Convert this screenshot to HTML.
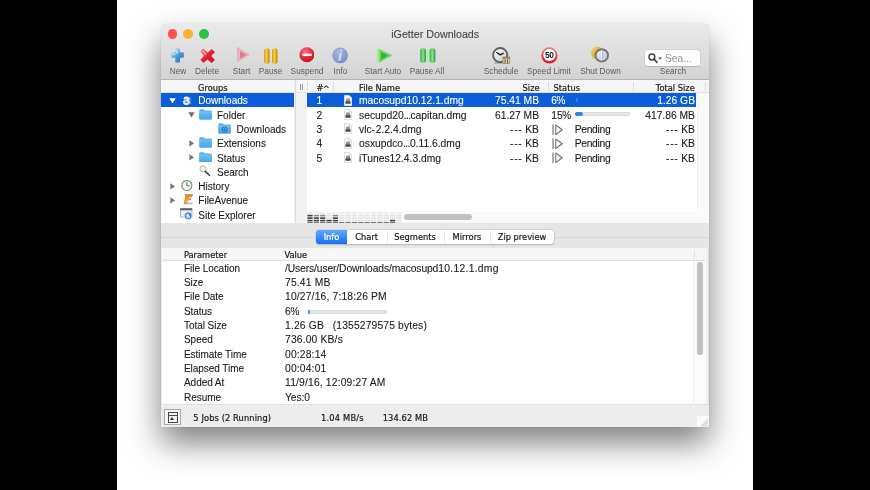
<!DOCTYPE html>
<html><head><meta charset="utf-8"><title>iGetter Downloads</title>
<style>
*{box-sizing:border-box;margin:0;padding:0}
html,body{width:870px;height:490px;overflow:hidden;background:#fff}
body{position:relative;font-family:"Liberation Sans",sans-serif;color:#1a1a1a}
.abs,.abs *{position:absolute}
.bar{position:absolute;top:0;height:490px;background:#000}
#win{will-change:transform;position:absolute;left:161px;top:24px;width:549px;height:403px}
#winbg{position:absolute;left:.3px;top:-.4px;width:547.8px;height:403.2px;background:#ececec;border-radius:5px 5px 0 0;
 box-shadow:0 0 1px rgba(0,0,0,.3),0 16px 32px rgba(0,0,0,.5)}
#chrome{position:absolute;left:.3px;top:-.4px;width:547.8px;height:56px;border-radius:5px 5px 0 0;
 background:linear-gradient(#eaeaea,#d3d3d3);border-bottom:1px solid #b4b4b4}
.tl{position:absolute;top:5px;width:9.8px;height:9.8px;border-radius:50%}
#title{position:absolute;left:.3px;width:547.8px;top:4.2px;text-align:center;font-size:10.7px;color:#444;line-height:12px;-webkit-text-stroke:.1px currentColor}
.tbl{position:absolute;top:42px;font-size:8.3px;color:#5c5c5c;line-height:10px;white-space:nowrap;transform:translateX(-50%)}
.t{position:absolute;white-space:nowrap;line-height:14px;font-size:10.3px;-webkit-text-stroke:.1px currentColor}
.h{position:absolute;white-space:nowrap;line-height:12px;font-size:8.3px;font-family:"DejaVu Sans","Liberation Sans",sans-serif;color:#1c1c1c;-webkit-text-stroke:.22px currentColor}
.r{text-align:right}
.e{letter-spacing:-.6px}
.d{letter-spacing:.7px}
.p{font-size:10px;margin-left:-.5px;letter-spacing:-.6px}
.w{color:#fff}
</style></head><body>
<div class="bar" style="left:0;width:117px"></div>
<div class="bar" style="left:753px;width:117px"></div>
<div id="win">
 <div id="winbg"></div>
 <div id="chrome"></div>
 <div class="tl" style="left:6.7px;background:#f9534f"></div>
 <div class="tl" style="left:22.4px;background:#f9b233"></div>
 <div class="tl" style="left:38.2px;background:#2fc143"></div>
 <div id="title">iGetter Downloads</div>
 <div class="tbl" style="left:17px">New</div>
<div class="tbl" style="left:46px">Delete</div>
<div class="tbl" style="left:80.5px">Start</div>
<div class="tbl" style="left:109.5px">Pause</div>
<div class="tbl" style="left:146px">Suspend</div>
<div class="tbl" style="left:179.5px">Info</div>
<div class="tbl" style="left:222px">Start Auto</div>
<div class="tbl" style="left:266px">Pause All</div>
<div class="tbl" style="left:340px">Schedule</div>
<div class="tbl" style="left:388px">Speed Limit</div>
<div class="tbl" style="left:439.5px">Shut Down</div>
<div class="tbl" style="left:512px">Search</div>
<svg style="position:absolute;left:10.4px;top:24.3px" width="13.2" height="14.9" viewBox="0 0 13.2 14.9"><defs><linearGradient id="pl" x1="0" y1="0" x2="1" y2="1"><stop offset="0" stop-color="#b9def6"/><stop offset=".5" stop-color="#4a9fde"/><stop offset="1" stop-color="#2462a8"/></linearGradient></defs><path d="M4.8 0.5H8.6L9 4.2L12.8 4.5V9.6L9.2 9.8L8.8 14.4H4.4L4.2 9.9L0.4 9.7V4.7L4.5 4.4Z" fill="url(#pl)"/><path d="M5.6 1.2H7L7.2 5.2L4.9 5.4Z" fill="#d5ecfa" opacity=".8"/><path d="M1 5.4L4.6 5.2V7L1 7.2Z" fill="#c2e2f7" opacity=".8"/></svg>
<svg style="position:absolute;left:38.6px;top:24px" width="15.3" height="15.5" viewBox="0 0 15.3 15.5"><defs><linearGradient id="rx" x1="0" y1="0" x2="1" y2="1"><stop offset="0" stop-color="#f08a94"/><stop offset=".5" stop-color="#e5202c"/><stop offset="1" stop-color="#b8101c"/></linearGradient></defs><path d="M3 0.5L7.6 4.4L11.6 0.9L15 4.1L11.2 7.9L14.9 11.9L11.6 15.1L7.5 11.4L3.4 15.1L0.3 11.8L4.1 7.8L0.3 3.6Z" fill="url(#rx)"/><path d="M2.6 2L7 5.8L5.4 7.2L1.6 3.2Z" fill="#f9c2c8" opacity=".7"/></svg>
<svg style="position:absolute;left:76px;top:23.4px" width="12.6" height="15" viewBox="0 0 12.6 15"><path d="M0.6 0.6L12.2 7.6L0.6 14.4Z" fill="#eab8c0" stroke="#dfa2ac" stroke-width=".8" stroke-linejoin="round"/><path d="M3 4L9.6 7.8L3 11.8Z" fill="#e07a8a"/></svg>
<svg style="position:absolute;left:102.7px;top:23.6px" width="14" height="16.2" viewBox="0 0 14 16.2"><defs><linearGradient id="gb" x1="0" y1="0" x2="1" y2="0"><stop offset="0" stop-color="#d8920e"/><stop offset=".45" stop-color="#f2cf40"/><stop offset="1" stop-color="#c07e06"/></linearGradient></defs><rect x="0.2" y="0.3" width="5.4" height="15.6" rx="2.6" fill="url(#gb)"/><rect x="8.1" y="0.3" width="5.4" height="15.6" rx="2.6" fill="url(#gb)"/></svg>
<svg style="position:absolute;left:137.6px;top:23px" width="15.8" height="15.6" viewBox="0 0 15.8 15.6"><defs><radialGradient id="rs" cx=".4" cy=".3" r=".8"><stop offset="0" stop-color="#f4707a"/><stop offset=".6" stop-color="#e02430"/><stop offset="1" stop-color="#b0101c"/></radialGradient></defs><circle cx="7.9" cy="7.7" r="7.5" fill="url(#rs)"/><rect x="3.3" y="6.5" width="9.4" height="2.6" rx=".4" fill="#fbeeee"/></svg>
<svg style="position:absolute;left:171.4px;top:23.4px" width="16.2" height="16.6" viewBox="0 0 16.2 16.6"><defs><radialGradient id="ib" cx=".4" cy=".3" r=".8"><stop offset="0" stop-color="#a9b8e0"/><stop offset=".7" stop-color="#8598cc"/><stop offset="1" stop-color="#6c7eb8"/></radialGradient></defs><circle cx="8.1" cy="8.3" r="7.9" fill="url(#ib)"/><path d="M8.6 2.6H10.6L10.2 4.4H8.2ZM7.8 5.8H9.9L8.4 13.4H6.3Z" fill="#d4def4"/></svg>
<svg style="position:absolute;left:214.8px;top:23.5px" width="16.6" height="15.2" viewBox="0 0 16.6 15.2"><path d="M0.8 0.8L4 0.8L16 7.2L4 14.4L0.8 14.4Z" fill="#a4e89a"/><path d="M3.4 1.4L15.8 7.4L3.4 14Z" fill="#63d058" stroke="#84dc7a" stroke-width=".6"/><path d="M5.2 4.4L11.8 7.6L5.2 11.4Z" fill="#2fb52e"/></svg>
<svg style="position:absolute;left:258.8px;top:24.4px" width="15.8" height="15.2" viewBox="0 0 15.8 15.2"><defs><linearGradient id="gg" x1="0" y1="0" x2="1" y2="0"><stop offset="0" stop-color="#3cae48"/><stop offset=".5" stop-color="#8ae08a"/><stop offset="1" stop-color="#2a963a"/></linearGradient></defs><rect x="0.2" y="0.3" width="5.8" height="14.6" rx="2.4" fill="url(#gg)"/><rect x="6.6" y="1" width="3" height="13.2" rx="1.2" fill="#b4ecb4"/><rect x="9.6" y="0.3" width="5.8" height="14.6" rx="2.4" fill="url(#gg)"/></svg>
<svg style="position:absolute;left:330.8px;top:22.7px" width="19" height="17" viewBox="0 0 19 17"><defs><linearGradient id="cf" x1="0" y1="0" x2="1" y2="1"><stop offset="0" stop-color="#ffffff"/><stop offset="1" stop-color="#c9c9c9"/></linearGradient></defs><path d="M2.4 15.9H13.6" stroke="#8e8e8e" stroke-width="1.1"/><circle cx="8.2" cy="8.1" r="7.1" fill="url(#cf)" stroke="#626262" stroke-width="1.9"/><path d="M4.4 5.2L8.2 7.9L11.6 6.2" stroke="#1c1c1c" stroke-width="1.3" fill="none" stroke-linejoin="round"/><rect x="11" y="10" width="6.8" height="6.6" fill="#e6d8b4" stroke="#8a7850" stroke-width=".6"/><rect x="11" y="10" width="6.8" height="1.7" fill="#9a8454"/><path d="M13.1 12.2V16.2M15.6 12.2V16.2" stroke="#5e5034" stroke-width="1"/></svg>
<svg style="position:absolute;left:380px;top:22.7px" width="17" height="17" viewBox="0 0 17 17"><defs><linearGradient id="sl" x1="0" y1="0" x2="0" y2="1"><stop offset="0" stop-color="#f07884"/><stop offset="1" stop-color="#d81c30"/></linearGradient></defs><circle cx="8.4" cy="8.4" r="8.1" fill="url(#sl)"/><circle cx="8.4" cy="7.9" r="6.1" fill="#fbfbfb"/><text x="8.2" y="10.8" text-anchor="middle" font-family="Liberation Sans, sans-serif" font-weight="bold" font-size="8.4" fill="#1a1a1a" letter-spacing="-.45">50</text></svg>
<svg style="position:absolute;left:430px;top:22.3px" width="17.8" height="17" viewBox="0 0 17.8 17"><defs><linearGradient id="sd" x1="0" y1="0" x2="1" y2="1"><stop offset="0" stop-color="#f6dc68"/><stop offset="1" stop-color="#c8820c"/></linearGradient><linearGradient id="sf" x1="0" y1="0" x2="1" y2="1"><stop offset="0" stop-color="#eef3fa"/><stop offset="1" stop-color="#b4c2d8"/></linearGradient></defs><circle cx="6.4" cy="7" r="6.4" fill="url(#sd)"/><circle cx="10.8" cy="9.4" r="6.2" fill="url(#sf)" stroke="#747478" stroke-width="1.9"/><path d="M10.8 4.8V13.8" stroke="#f4f6fa" stroke-width="1.3"/><path d="M11.6 5V13.6" stroke="#7c8aa0" stroke-width=".5"/></svg>
<div style="position:absolute;left:483.6px;top:25.8px;width:55.7px;height:16.2px;background:#fff;border-radius:3.5px;box-shadow:0 0 0 .5px #c9c9c9,0 .6px .8px rgba(0,0,0,.22)"></div>
<svg style="position:absolute;left:487.3px;top:28.6px" width="14.5" height="11" viewBox="0 0 14.5 11"><circle cx="3.9" cy="4" r="2.9" fill="none" stroke="#444" stroke-width="1.5"/><path d="M6 6.2L9 9.4" stroke="#444" stroke-width="1.7" stroke-linecap="round"/><path d="M10.2 4.6H14L12.1 6.8Z" fill="#444"/></svg>
<div style="position:absolute;left:503.9px;top:27.6px;font-size:10.4px;line-height:13px;color:#949494;white-space:nowrap">Sea<span style="letter-spacing:-.3px">...</span></div>
 <div style="position:absolute;left:0.3px;top:56px;width:133.2px;height:142.8px;background:#fff"></div>
<div style="position:absolute;left:0.3px;top:56px;width:133.2px;height:13px;background:#f6f6f6;border-bottom:1px solid #e2e2e2"></div>
<div class="h" style="left:37px;top:57.6px">Groups</div>
<div style="position:absolute;left:0.3px;top:69.0px;width:133.2px;height:13.8px;background:#0b5ed7"></div>
<div class="t w" style="left:37.3px;top:70.3px;font-size:10px">Downloads</div>
<div class="t" style="left:56px;top:84.6px;font-size:10px">Folder</div>
<div class="t" style="left:75.6px;top:98.9px;font-size:10px">Downloads</div>
<div class="t" style="left:56px;top:113.2px;font-size:10px">Extensions</div>
<div class="t" style="left:56px;top:127.5px;font-size:10px">Status</div>
<div class="t" style="left:56px;top:141.8px;font-size:10px">Search</div>
<div class="t" style="left:37.3px;top:156.1px;font-size:10px">History</div>
<div class="t" style="left:37.3px;top:170.4px;font-size:10px">FileAvenue</div>
<div class="t" style="left:37.3px;top:184.7px;font-size:10px">Site Explorer</div>
<svg style="position:absolute;left:7.6px;top:73.8px" width="7" height="5.6" viewBox="0 0 7 5.6"><path d="M0.2 0.3H6.8L3.5 5.4Z" fill="#fff"/></svg>
<svg style="position:absolute;left:21px;top:72.2px" width="9.2" height="9.4" viewBox="0 0 9.2 9.4"><path d="M2.6 2.4C3.6 1.3 6.4 1.2 6.5 2.9C6.6 4.2 5.2 4.5 4.2 4.5C5.6 4.5 7 5 6.8 6.5C6.5 8.3 3.6 8.3 2.2 7.2" fill="none" stroke="#f4f7fd" stroke-width="2.1" stroke-linecap="round" stroke-linejoin="round"/><path d="M0.2 5.6L3 4L3 7.2Z" fill="#e4ecfa"/><circle cx="6.4" cy="4.6" r="3.9" fill="#cfdcf5" opacity=".35"/></svg>
<svg style="position:absolute;left:27px;top:88.1px" width="7" height="5.6" viewBox="0 0 7 5.6"><path d="M0.2 0.3H6.8L3.5 5.4Z" fill="#727272"/></svg>
<svg style="position:absolute;left:38.2px;top:85.1px" width="13.1" height="10.7" viewBox="0 0 13.1 10.7"><defs><linearGradient id="fg" x1="0" y1="0" x2="0" y2="1"><stop offset="0" stop-color="#6cbcf0"/><stop offset="1" stop-color="#4aa6e6"/></linearGradient></defs><path d="M0.3 1.1Q0.3 0.3 1.1 0.3H4.4Q5 0.3 5.4 0.9L5.9 1.6H12Q12.8 1.6 12.8 2.4V9.6Q12.8 10.4 12 10.4H1.1Q0.3 10.4 0.3 9.6Z" fill="#58b0ea"/><path d="M0.3 2.9H12.8V9.6Q12.8 10.4 12 10.4H1.1Q0.3 10.4 0.3 9.6Z" fill="url(#fg)"/><path d="M0.3 2.9H12.8" stroke="#8ccdf6" stroke-width=".5"/></svg>
<svg style="position:absolute;left:57px;top:99.2px" width="13.1" height="10.7" viewBox="0 0 13.1 10.7"><defs><linearGradient id="fg" x1="0" y1="0" x2="0" y2="1"><stop offset="0" stop-color="#6cbcf0"/><stop offset="1" stop-color="#4aa6e6"/></linearGradient></defs><path d="M0.3 1.1Q0.3 0.3 1.1 0.3H4.4Q5 0.3 5.4 0.9L5.9 1.6H12Q12.8 1.6 12.8 2.4V9.6Q12.8 10.4 12 10.4H1.1Q0.3 10.4 0.3 9.6Z" fill="#58b0ea"/><path d="M0.3 2.9H12.8V9.6Q12.8 10.4 12 10.4H1.1Q0.3 10.4 0.3 9.6Z" fill="url(#fg)"/><path d="M0.3 2.9H12.8" stroke="#8ccdf6" stroke-width=".5"/><circle cx="6.6" cy="6.6" r="2.6" fill="none" stroke="#2078c4" stroke-width="1.1"/><path d="M6.6 5V7.6M5.4 6.6L6.6 7.9L7.8 6.6" stroke="#2078c4" stroke-width="1" fill="none"/></svg>
<svg style="position:absolute;left:28.1px;top:115.8px" width="5.4" height="6.8" viewBox="0 0 5.4 6.8"><path d="M0.3 0.2V6.6L5.2 3.4Z" fill="#7a7a7a"/></svg>
<svg style="position:absolute;left:38.2px;top:113.3px" width="13.1" height="10.7" viewBox="0 0 13.1 10.7"><defs><linearGradient id="fg" x1="0" y1="0" x2="0" y2="1"><stop offset="0" stop-color="#6cbcf0"/><stop offset="1" stop-color="#4aa6e6"/></linearGradient></defs><path d="M0.3 1.1Q0.3 0.3 1.1 0.3H4.4Q5 0.3 5.4 0.9L5.9 1.6H12Q12.8 1.6 12.8 2.4V9.6Q12.8 10.4 12 10.4H1.1Q0.3 10.4 0.3 9.6Z" fill="#58b0ea"/><path d="M0.3 2.9H12.8V9.6Q12.8 10.4 12 10.4H1.1Q0.3 10.4 0.3 9.6Z" fill="url(#fg)"/><path d="M0.3 2.9H12.8" stroke="#8ccdf6" stroke-width=".5"/></svg>
<svg style="position:absolute;left:28.1px;top:130.1px" width="5.4" height="6.8" viewBox="0 0 5.4 6.8"><path d="M0.3 0.2V6.6L5.2 3.4Z" fill="#7a7a7a"/></svg>
<svg style="position:absolute;left:38.2px;top:127.7px" width="13.1" height="10.7" viewBox="0 0 13.1 10.7"><defs><linearGradient id="fg" x1="0" y1="0" x2="0" y2="1"><stop offset="0" stop-color="#6cbcf0"/><stop offset="1" stop-color="#4aa6e6"/></linearGradient></defs><path d="M0.3 1.1Q0.3 0.3 1.1 0.3H4.4Q5 0.3 5.4 0.9L5.9 1.6H12Q12.8 1.6 12.8 2.4V9.6Q12.8 10.4 12 10.4H1.1Q0.3 10.4 0.3 9.6Z" fill="#58b0ea"/><path d="M0.3 2.9H12.8V9.6Q12.8 10.4 12 10.4H1.1Q0.3 10.4 0.3 9.6Z" fill="url(#fg)"/><path d="M0.3 2.9H12.8" stroke="#8ccdf6" stroke-width=".5"/></svg>
<svg style="position:absolute;left:38.4px;top:141.2px" width="11.5" height="11" viewBox="0 0 11.5 11"><circle cx="4" cy="3.9" r="3.1" fill="#f4f6f8" stroke="#a9a9a9" stroke-width=".9"/><path d="M6.3 6.4L10.4 10.2" stroke="#3a3a3a" stroke-width="1.5" stroke-linecap="round"/></svg>
<svg style="position:absolute;left:9.4px;top:159px" width="5.4" height="6.8" viewBox="0 0 5.4 6.8"><path d="M0.3 0.2V6.6L5.2 3.4Z" fill="#7a7a7a"/></svg>
<svg style="position:absolute;left:20.2px;top:156.2px" width="11.6" height="11.2" viewBox="0 0 11.6 11.2"><circle cx="5.8" cy="5.6" r="5" fill="#f6f8f4" stroke="#7f9c82" stroke-width="1.3"/><path d="M5.8 2.2V5.8H8.6" stroke="#4c5a4c" stroke-width=".9" fill="none"/></svg>
<svg style="position:absolute;left:9.4px;top:173.3px" width="5.4" height="6.8" viewBox="0 0 5.4 6.8"><path d="M0.3 0.2V6.6L5.2 3.4Z" fill="#7a7a7a"/></svg>
<svg style="position:absolute;left:20.6px;top:170.3px" width="12.3" height="11.2" viewBox="0 0 12.3 11.2"><path d="M0.5 10.6L3 8.6H11.6L9.4 10.6Z" fill="#bdbdbd"/><path d="M3.2 0.6H10.6L10 2.6H6.4L6 4.2H8.8L8.3 6H5.6L4.8 9.2H2.2L3.6 3.4Z" fill="#f08a1c" stroke="#b45d08" stroke-width=".5"/><path d="M2 8.2L6.8 3.4L8.2 4.4L4 9.4Z" fill="#f6b253" opacity=".85"/></svg>
<svg style="position:absolute;left:19.1px;top:183.8px" width="13" height="11.8" viewBox="0 0 13 11.8"><rect x="0.4" y="0.4" width="11.6" height="8.6" fill="#f1f3f6" stroke="#8e949c" stroke-width=".7"/><rect x="0.4" y="0.4" width="11.6" height="1.9" fill="#565c66"/><circle cx="8.2" cy="7.8" r="3.7" fill="#3f7fd0" stroke="#d8e4f4" stroke-width=".6"/><path d="M5.8 7.2Q7 5.6 8.8 5.4Q8 6.8 9.4 7.4Q10.6 8 10 9.6Q8.4 9 7.6 10.4Q6.6 9 5.8 7.2Z" fill="#e6eefa" opacity=".9"/></svg>
 <div style="position:absolute;left:133.5px;top:56px;width:12.5px;height:143px;background:#f1f1f1;border-left:1px solid #dcdcdc"></div>
<div style="position:absolute;left:145.6px;top:56px;width:402.4px;height:143px;background:#fff"></div>
<div style="position:absolute;left:136px;top:56px;width:412px;height:13px;background:#f6f6f6;border-bottom:1px solid #e2e2e2"></div>
<div style="position:absolute;left:145.5px;top:58px;width:1px;height:9px;background:#dcdcdc"></div>
<div style="position:absolute;left:171.5px;top:58px;width:1px;height:9px;background:#dcdcdc"></div>
<div style="position:absolute;left:387.4px;top:58px;width:1px;height:9px;background:#dcdcdc"></div>
<div style="position:absolute;left:472px;top:58px;width:1px;height:9px;background:#dcdcdc"></div>
<div style="position:absolute;left:543.8px;top:58px;width:1px;height:9px;background:#dcdcdc"></div>
<div style="position:absolute;left:138.6px;top:60px;width:3px;height:6px;border-left:1px solid #9a9a9a;border-right:1px solid #9a9a9a"></div>
<div class="h" style="left:155.5px;top:57.6px">#<span style="position:relative;top:1.6px;margin-left:-.6px">^</span></div>
<div class="h" style="left:198px;top:57.6px">File Name</div>
<div class="h r" style="right:170.39999999999998px;top:57.6px">Size</div>
<div class="h" style="left:392.6px;top:57.6px">Status</div>
<div class="h r" style="right:15.200000000000045px;top:57.6px">Total Size</div>
<div style="position:absolute;left:145.8px;top:69.0px;width:389.7px;height:13.8px;background:#0b5ed7"></div>
<div class="t w" style="left:155.6px;top:70.3px">1</div>
<svg style="position:absolute;left:183px;top:70.7px" width="8" height="11" viewBox="0 0 8 11"><path d="M0.4 0.4H5L7.6 3V10.6H0.4Z" fill="#fcfcfc" stroke="#f2f6ff" stroke-width=".7"/><path d="M5 0.4V3H7.6Z" fill="#e9e9e9" stroke="#cfcfcf" stroke-width=".4"/><path d="M1.6 6.9L2.3 3.9H5.7L6.4 6.9Z" fill="#8a8a8a"/><rect x="1.4" y="6.4" width="5.2" height="2.4" rx=".5" fill="#484848"/><rect x="2.6" y="3.4" width="2.8" height="1.6" fill="#9a9a9a"/></svg>
<div class="t w" style="left:198px;top:70.3px">macosupd10.12.1.dmg</div>
<div class="t r w" style="right:171px;top:70.3px">75.41 MB</div>
<div class="t w" style="left:390.3px;top:70.3px">6<span class=p>%</span></div>
<div class="t r w" style="right:15px;top:70.3px">1.26 GB</div>
<div class="t" style="left:155.6px;top:84.6px">2</div>
<svg style="position:absolute;left:183px;top:85.0px" width="8" height="11" viewBox="0 0 8 11"><path d="M0.4 0.4H5L7.6 3V10.6H0.4Z" fill="#fcfcfc" stroke="#cfcfcf" stroke-width=".7"/><path d="M5 0.4V3H7.6Z" fill="#e9e9e9" stroke="#cfcfcf" stroke-width=".4"/><path d="M1.6 6.9L2.3 3.9H5.7L6.4 6.9Z" fill="#8a8a8a"/><rect x="1.4" y="6.4" width="5.2" height="2.4" rx=".5" fill="#484848"/><rect x="2.6" y="3.4" width="2.8" height="1.6" fill="#9a9a9a"/></svg>
<div class="t" style="left:198px;top:84.6px">secupd20<span class=e>...</span>capitan.dmg</div>
<div class="t r" style="right:171px;top:84.6px">61.27 MB</div>
<div class="t" style="left:390.3px;top:84.6px">15<span class=p>%</span></div>
<div class="t r" style="right:15px;top:84.6px">417.86 MB</div>
<div class="t" style="left:155.6px;top:98.9px">3</div>
<svg style="position:absolute;left:183px;top:99.30000000000001px" width="8" height="11" viewBox="0 0 8 11"><path d="M0.4 0.4H5L7.6 3V10.6H0.4Z" fill="#fcfcfc" stroke="#cfcfcf" stroke-width=".7"/><path d="M5 0.4V3H7.6Z" fill="#e9e9e9" stroke="#cfcfcf" stroke-width=".4"/><path d="M1.6 6.9L2.3 3.9H5.7L6.4 6.9Z" fill="#8a8a8a"/><rect x="1.4" y="6.4" width="5.2" height="2.4" rx=".5" fill="#484848"/><rect x="2.6" y="3.4" width="2.8" height="1.6" fill="#9a9a9a"/></svg>
<div class="t" style="left:198px;top:98.9px">vlc<span class=d>-</span>2.2.4.dmg</div>
<div class="t r" style="right:171px;top:98.9px"><span class=d>---</span> KB</div>
<svg style="position:absolute;left:391px;top:99.5px" width="11.5" height="11.5" viewBox="0 0 11 10" preserveAspectRatio="none"><path d="M1 0.5V9.5" stroke="#606060" stroke-width="1" fill="none"/><path d="M3.6 0.8L9.8 5L3.6 9.2Z" stroke="#606060" stroke-width=".9" fill="#f6f6f6" stroke-linejoin="round"/></svg>
<div class="t" style="left:413.7px;top:98.9px;letter-spacing:-.3px">Pending</div>
<div class="t r" style="right:15px;top:98.9px"><span class=d>---</span> KB</div>
<div class="t" style="left:155.6px;top:113.2px">4</div>
<svg style="position:absolute;left:183px;top:113.60000000000001px" width="8" height="11" viewBox="0 0 8 11"><path d="M0.4 0.4H5L7.6 3V10.6H0.4Z" fill="#fcfcfc" stroke="#cfcfcf" stroke-width=".7"/><path d="M5 0.4V3H7.6Z" fill="#e9e9e9" stroke="#cfcfcf" stroke-width=".4"/><path d="M1.6 6.9L2.3 3.9H5.7L6.4 6.9Z" fill="#8a8a8a"/><rect x="1.4" y="6.4" width="5.2" height="2.4" rx=".5" fill="#484848"/><rect x="2.6" y="3.4" width="2.8" height="1.6" fill="#9a9a9a"/></svg>
<div class="t" style="left:198px;top:113.2px">osxupdco<span class=e>...</span>0.11.6.dmg</div>
<div class="t r" style="right:171px;top:113.2px"><span class=d>---</span> KB</div>
<svg style="position:absolute;left:391px;top:113.8px" width="11.5" height="11.5" viewBox="0 0 11 10" preserveAspectRatio="none"><path d="M1 0.5V9.5" stroke="#606060" stroke-width="1" fill="none"/><path d="M3.6 0.8L9.8 5L3.6 9.2Z" stroke="#606060" stroke-width=".9" fill="#f6f6f6" stroke-linejoin="round"/></svg>
<div class="t" style="left:413.7px;top:113.2px;letter-spacing:-.3px">Pending</div>
<div class="t r" style="right:15px;top:113.2px"><span class=d>---</span> KB</div>
<div class="t" style="left:155.6px;top:127.5px">5</div>
<svg style="position:absolute;left:183px;top:127.9px" width="8" height="11" viewBox="0 0 8 11"><path d="M0.4 0.4H5L7.6 3V10.6H0.4Z" fill="#fcfcfc" stroke="#cfcfcf" stroke-width=".7"/><path d="M5 0.4V3H7.6Z" fill="#e9e9e9" stroke="#cfcfcf" stroke-width=".4"/><path d="M1.6 6.9L2.3 3.9H5.7L6.4 6.9Z" fill="#8a8a8a"/><rect x="1.4" y="6.4" width="5.2" height="2.4" rx=".5" fill="#484848"/><rect x="2.6" y="3.4" width="2.8" height="1.6" fill="#9a9a9a"/></svg>
<div class="t" style="left:198px;top:127.5px">iTunes12.4.3.dmg</div>
<div class="t r" style="right:171px;top:127.5px"><span class=d>---</span> KB</div>
<svg style="position:absolute;left:391px;top:128.1px" width="11.5" height="11.5" viewBox="0 0 11 10" preserveAspectRatio="none"><path d="M1 0.5V9.5" stroke="#606060" stroke-width="1" fill="none"/><path d="M3.6 0.8L9.8 5L3.6 9.2Z" stroke="#606060" stroke-width=".9" fill="#f6f6f6" stroke-linejoin="round"/></svg>
<div class="t" style="left:413.7px;top:127.5px;letter-spacing:-.3px">Pending</div>
<div class="t r" style="right:15px;top:127.5px"><span class=d>---</span> KB</div>
<div style="position:absolute;left:415px;top:74.3px;width:1.5px;height:4px;background:#3b7fe0;border-radius:1px"></div>
<div style="position:absolute;left:414.2px;top:88.0px;width:54.6px;height:4.4px;background:#e6e6e6;border-radius:2.2px;box-shadow:inset 0 0 0 .5px #d2d2d2"></div>
<div style="position:absolute;left:414.2px;top:88.0px;width:7.5px;height:4.4px;background:#3385e4;border-radius:2.2px"></div>
<div style="position:absolute;left:535.6px;top:69px;width:12.5px;height:130px;background:#fafafa;border-left:1px solid #f0f0f0"></div>
<div style="position:absolute;left:145.6px;top:187px;width:402.4px;height:12px;background:#fafafa"></div>
<svg style="position:absolute;left:145.8px;top:187.6px" width="96" height="12" viewBox="0 0 96 12"><rect x="0.4" y="0.3" width="5.25" height="1.6" fill="#ececec"/><rect x="0.4" y="2.8" width="5.25" height="1.6" fill="#3e3e3e"/><rect x="0.4" y="5.3" width="5.25" height="1.6" fill="#3e3e3e"/><rect x="0.4" y="7.8" width="5.25" height="1.6" fill="#3e3e3e"/><rect x="0.4" y="10.3" width="5.25" height="1.6" fill="#3e3e3e"/><rect x="6.75" y="0.3" width="5.25" height="1.6" fill="#ececec"/><rect x="6.75" y="2.8" width="5.25" height="1.6" fill="#8a8a8a"/><rect x="6.75" y="5.3" width="5.25" height="1.6" fill="#3e3e3e"/><rect x="6.75" y="7.8" width="5.25" height="1.6" fill="#3e3e3e"/><rect x="6.75" y="10.3" width="5.25" height="1.6" fill="#3e3e3e"/><rect x="13.1" y="0.3" width="5.25" height="1.6" fill="#ececec"/><rect x="13.1" y="2.8" width="5.25" height="1.6" fill="#8a8a8a"/><rect x="13.1" y="5.3" width="5.25" height="1.6" fill="#3e3e3e"/><rect x="13.1" y="7.8" width="5.25" height="1.6" fill="#3e3e3e"/><rect x="13.1" y="10.3" width="5.25" height="1.6" fill="#3e3e3e"/><rect x="19.45" y="0.3" width="5.25" height="1.6" fill="#ececec"/><rect x="19.45" y="2.8" width="5.25" height="1.6" fill="#e2e2e2"/><rect x="19.45" y="5.3" width="5.25" height="1.6" fill="#e2e2e2"/><rect x="19.45" y="7.8" width="5.25" height="1.6" fill="#3e3e3e"/><rect x="19.45" y="10.3" width="5.25" height="1.6" fill="#3e3e3e"/><rect x="25.8" y="0.3" width="5.25" height="1.6" fill="#ececec"/><rect x="25.8" y="2.8" width="5.25" height="1.6" fill="#8a8a8a"/><rect x="25.8" y="5.3" width="5.25" height="1.6" fill="#3e3e3e"/><rect x="25.8" y="7.8" width="5.25" height="1.6" fill="#3e3e3e"/><rect x="25.8" y="10.3" width="5.25" height="1.6" fill="#3e3e3e"/><rect x="32.15" y="0.3" width="5.25" height="1.6" fill="#ececec"/><rect x="32.15" y="2.8" width="5.25" height="1.6" fill="#e2e2e2"/><rect x="32.15" y="5.3" width="5.25" height="1.6" fill="#e2e2e2"/><rect x="32.15" y="7.8" width="5.25" height="1.6" fill="#e2e2e2"/><rect x="32.15" y="10.3" width="5.25" height="1.6" fill="#3e3e3e"/><rect x="38.5" y="0.3" width="5.25" height="1.6" fill="#ececec"/><rect x="38.5" y="2.8" width="5.25" height="1.6" fill="#e2e2e2"/><rect x="38.5" y="5.3" width="5.25" height="1.6" fill="#e2e2e2"/><rect x="38.5" y="7.8" width="5.25" height="1.6" fill="#e2e2e2"/><rect x="38.5" y="10.3" width="5.25" height="1.6" fill="#3e3e3e"/><rect x="44.85" y="0.3" width="5.25" height="1.6" fill="#ececec"/><rect x="44.85" y="2.8" width="5.25" height="1.6" fill="#e2e2e2"/><rect x="44.85" y="5.3" width="5.25" height="1.6" fill="#e2e2e2"/><rect x="44.85" y="7.8" width="5.25" height="1.6" fill="#e2e2e2"/><rect x="44.85" y="10.3" width="5.25" height="1.6" fill="#3e3e3e"/><rect x="51.2" y="0.3" width="5.25" height="1.6" fill="#ececec"/><rect x="51.2" y="2.8" width="5.25" height="1.6" fill="#e2e2e2"/><rect x="51.2" y="5.3" width="5.25" height="1.6" fill="#e2e2e2"/><rect x="51.2" y="7.8" width="5.25" height="1.6" fill="#e2e2e2"/><rect x="51.2" y="10.3" width="5.25" height="1.6" fill="#3e3e3e"/><rect x="57.55" y="0.3" width="5.25" height="1.6" fill="#ececec"/><rect x="57.55" y="2.8" width="5.25" height="1.6" fill="#e2e2e2"/><rect x="57.55" y="5.3" width="5.25" height="1.6" fill="#e2e2e2"/><rect x="57.55" y="7.8" width="5.25" height="1.6" fill="#e2e2e2"/><rect x="57.55" y="10.3" width="5.25" height="1.6" fill="#3e3e3e"/><rect x="63.9" y="0.3" width="5.25" height="1.6" fill="#ececec"/><rect x="63.9" y="2.8" width="5.25" height="1.6" fill="#e2e2e2"/><rect x="63.9" y="5.3" width="5.25" height="1.6" fill="#e2e2e2"/><rect x="63.9" y="7.8" width="5.25" height="1.6" fill="#e2e2e2"/><rect x="63.9" y="10.3" width="5.25" height="1.6" fill="#3e3e3e"/><rect x="70.25" y="0.3" width="5.25" height="1.6" fill="#ececec"/><rect x="70.25" y="2.8" width="5.25" height="1.6" fill="#e2e2e2"/><rect x="70.25" y="5.3" width="5.25" height="1.6" fill="#e2e2e2"/><rect x="70.25" y="7.8" width="5.25" height="1.6" fill="#e2e2e2"/><rect x="70.25" y="10.3" width="5.25" height="1.6" fill="#3e3e3e"/><rect x="76.6" y="0.3" width="5.25" height="1.6" fill="#ececec"/><rect x="76.6" y="2.8" width="5.25" height="1.6" fill="#e2e2e2"/><rect x="76.6" y="5.3" width="5.25" height="1.6" fill="#e2e2e2"/><rect x="76.6" y="7.8" width="5.25" height="1.6" fill="#e2e2e2"/><rect x="76.6" y="10.3" width="5.25" height="1.6" fill="#3e3e3e"/><rect x="82.95" y="0.3" width="5.25" height="1.6" fill="#ececec"/><rect x="82.95" y="2.8" width="5.25" height="1.6" fill="#e2e2e2"/><rect x="82.95" y="5.3" width="5.25" height="1.6" fill="#e2e2e2"/><rect x="82.95" y="7.8" width="5.25" height="1.6" fill="#3e3e3e"/><rect x="82.95" y="10.3" width="5.25" height="1.6" fill="#3e3e3e"/><rect x="89.3" y="0.3" width="5.25" height="1.6" fill="#ececec"/><rect x="89.3" y="2.8" width="5.25" height="1.6" fill="#e2e2e2"/><rect x="89.3" y="5.3" width="5.25" height="1.6" fill="#e2e2e2"/><rect x="89.3" y="7.8" width="5.25" height="1.6" fill="#e2e2e2"/><rect x="89.3" y="10.3" width="5.25" height="1.6" fill="#e2e2e2"/></svg>
<div style="position:absolute;left:242.8px;top:189.8px;width:67.8px;height:6.4px;background:#c1c1c1;border-radius:3.2px"></div>
 <div style="position:absolute;left:0.3px;top:199px;width:547.8px;height:14.599999999999994px;background:#e6e6e6;border-bottom:1px solid #d6d6d6"></div>
<div style="position:absolute;left:0.3px;top:214px;width:547.8px;height:10.2px;background:#e6e6e6"></div>
<div style="position:absolute;left:155px;top:206px;width:237.5px;height:13.8px;background:#fff;border-radius:3px;box-shadow:0 0 0 .5px #c4c4c4,0 .5px 1px rgba(0,0,0,.25)"></div>
<div style="position:absolute;left:155px;top:206px;width:31px;height:13.8px;background:linear-gradient(#62a9f8,#1a6ef2);border-radius:3px 0 0 3px"></div>
<div style="position:absolute;left:225.5px;top:207px;width:1px;height:12px;background:#e6e6e6"></div>
<div style="position:absolute;left:282.5px;top:207px;width:1px;height:12px;background:#e6e6e6"></div>
<div style="position:absolute;left:329.2px;top:207px;width:1px;height:12px;background:#e6e6e6"></div>
<div class="h w" style="left:170.5px;top:207px;transform:translateX(-50%)">Info</div>
<div class="h" style="left:205.7px;top:207px;transform:translateX(-50%)">Chart</div>
<div class="h" style="left:254px;top:207px;transform:translateX(-50%)">Segments</div>
<div class="h" style="left:306px;top:207px;transform:translateX(-50%)">Mirrors</div>
<div class="h" style="left:361px;top:207px;transform:translateX(-50%)">Zip preview</div>
 <div style="position:absolute;left:0.8px;top:224px;width:543.2px;height:156px;background:#fff"></div>
<div style="position:absolute;left:0.8px;top:224px;width:543.2px;height:12.5px;background:#f6f6f6;border-bottom:1px solid #dedede"></div>
<div style="position:absolute;left:544px;top:224px;width:4.2px;height:156px;background:linear-gradient(to right,#fbfbfb,#f2f2f2 50%,#dcdcdc)"></div>
<div style="position:absolute;left:533px;top:226px;width:1px;height:8.5px;background:#e2e2e2"></div>
<div style="position:absolute;left:532px;top:236.6px;width:12px;height:143.60000000000002px;background:#fafafa;border-left:1px solid #ededed"></div>
<div style="position:absolute;left:536.1px;top:238px;width:5.9px;height:93px;background:#c1c1c1;border-radius:2.8px"></div>
<div class="h" style="left:22.9px;top:225px">Parameter</div>
<div class="h" style="left:123.4px;top:225px">Value</div>
<div class="t" style="left:23px;top:237.8px;font-size:10px;letter-spacing:-.05px">File Location</div>
<div class="t" style="left:124px;top:237.8px;letter-spacing:-.12px">/Users/user/Downloads/macosupd<span style="letter-spacing:.3px">10.12.1.dmg</span></div>
<div class="t" style="left:23px;top:252.1px;font-size:10px;letter-spacing:-.05px">Size</div>
<div class="t" style="left:124px;top:252.1px;letter-spacing:.17px">75.41 MB</div>
<div class="t" style="left:23px;top:266.4px;font-size:10px;letter-spacing:-.05px">File Date</div>
<div class="t" style="left:124px;top:266.4px;letter-spacing:.17px">10/27/16, 7:18:26 PM</div>
<div class="t" style="left:23px;top:280.7px;font-size:10px;letter-spacing:-.05px">Status</div>
<div class="t" style="left:124px;top:280.7px;letter-spacing:.17px">6<span class=p>%</span></div>
<div class="t" style="left:23px;top:295.0px;font-size:10px;letter-spacing:-.05px">Total Size</div>
<div class="t" style="left:124px;top:295.0px;letter-spacing:.17px">1.26 GB</div>
<div class="t" style="left:23px;top:309.3px;font-size:10px;letter-spacing:-.05px">Speed</div>
<div class="t" style="left:124px;top:309.3px;letter-spacing:.17px">736.00 KB/s</div>
<div class="t" style="left:23px;top:323.6px;font-size:10px;letter-spacing:-.05px">Estimate Time</div>
<div class="t" style="left:124px;top:323.6px;letter-spacing:.17px">00:28:14</div>
<div class="t" style="left:23px;top:337.9px;font-size:10px;letter-spacing:-.05px">Elapsed Time</div>
<div class="t" style="left:124px;top:337.9px;letter-spacing:.17px">00:04:01</div>
<div class="t" style="left:23px;top:352.2px;font-size:10px;letter-spacing:-.05px">Added At</div>
<div class="t" style="left:124px;top:352.2px;letter-spacing:.17px">11/9/16, 12:09:27 AM</div>
<div class="t" style="left:23px;top:366.5px;font-size:10px;letter-spacing:-.05px">Resume</div>
<div class="t" style="left:124px;top:366.5px;letter-spacing:-.12px">Yes:0</div>
<div class="t" style="left:171.7px;top:295.0px;letter-spacing:.15px">(1355279575 bytes)</div>
<div style="position:absolute;left:147.3px;top:285.5px;width:78.4px;height:4.4px;background:#e6e6e6;border-radius:2.2px;box-shadow:inset 0 0 0 .5px #d2d2d2"></div>
<div style="position:absolute;left:147.3px;top:285.5px;width:2.2px;height:4.4px;background:#3f8eea;border-radius:1.1px"></div>
 <div style="position:absolute;left:0.3px;top:380px;width:547.8px;height:22.80000000000001px;background:#ededed;border-top:1px solid #e0e0e0"></div>
<div style="position:absolute;left:3.4px;top:385.4px;width:17px;height:15.4px;background:#f7f7f7;border:1px solid #a9a9a9"></div>
<div style="position:absolute;left:6.8px;top:388px;width:10.4px;height:10.8px;border:1px solid #4a4a4a;background:#f2f2f2"></div>
<div style="position:absolute;left:7.6px;top:390.6px;width:8.8px;height:1px;background:#4a4a4a"></div>
<div style="position:absolute;left:9px;top:393px;width:0;height:0;border-left:2.9px solid transparent;border-right:2.9px solid transparent;border-bottom:3.8px solid #333"></div>
<div class="h" style="left:32.3px;top:387.7px;letter-spacing:.1px">5 Jobs (2 Running)</div>
<div class="h" style="left:160px;top:387.7px;letter-spacing:.2px">1.04 MB/s</div>
<div class="h" style="left:221.7px;top:387.7px;letter-spacing:.1px">134.62 MB</div>
<svg style="position:absolute;left:536.2px;top:391.8px" width="11.6" height="10.8" viewBox="0 0 11.6 10.8"><rect width="11.6" height="10.8" fill="#fafafa"/><path d="M11 3.6L4 10.6M11 6.2L6.6 10.6M11 8.8L9.2 10.6" stroke="#a6a6a6" stroke-width=".8" fill="none"/></svg>
</div>
</body></html>
